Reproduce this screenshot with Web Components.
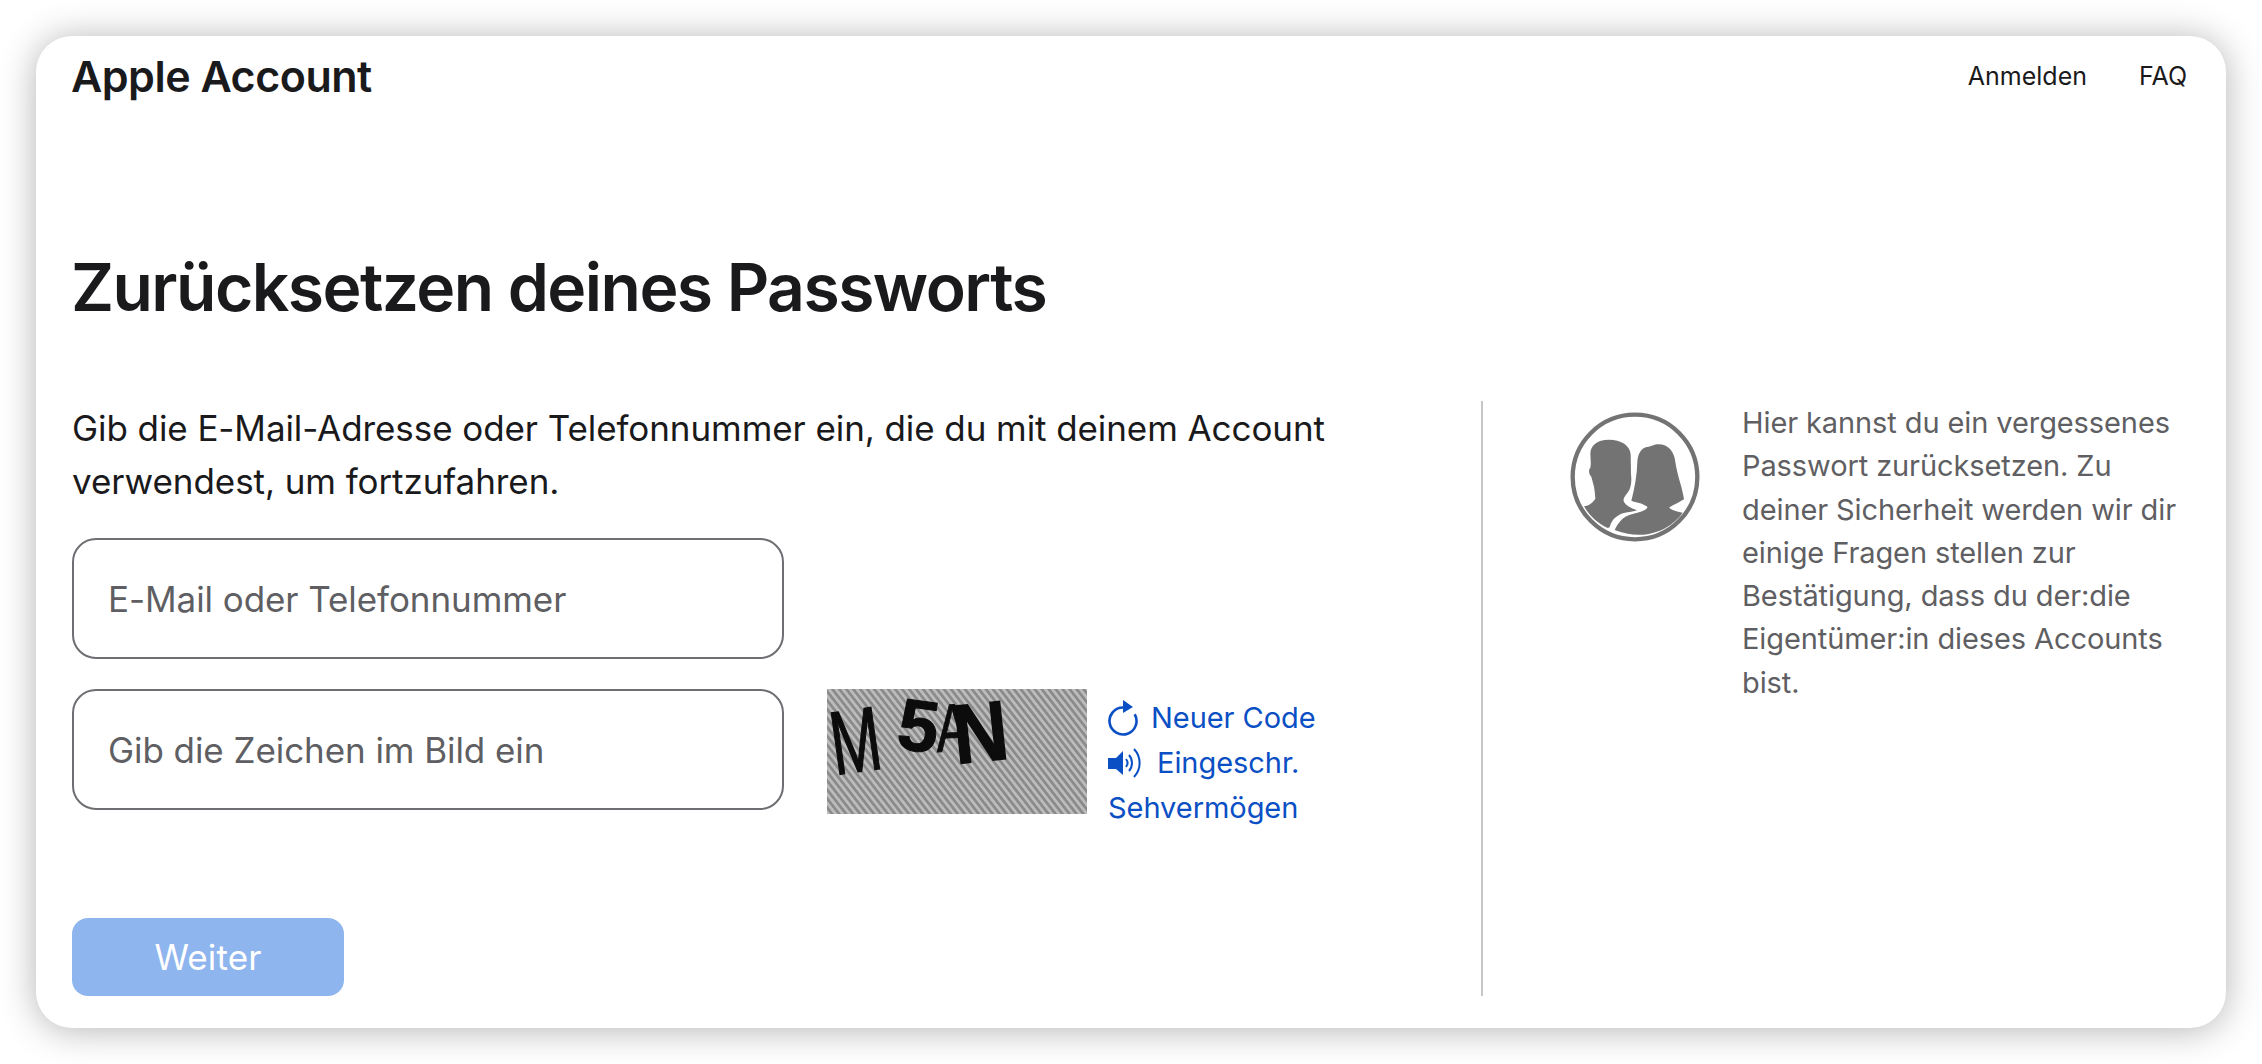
<!DOCTYPE html>
<html lang="de">
<head>
<meta charset="utf-8">
<title>Apple Account</title>
<style>
  html, body { margin: 0; background: #fff; }
  body { font-family: Inter, "Liberation Sans", sans-serif; color: #1a1a1c; }
</style>
</head>
<body>
<account-card>
  <account-header slot="header"></account-header>
  <h-title slot="title">Zurücksetzen deines Passworts</h-title>
  <reset-form slot="main"></reset-form>
  <help-aside slot="aside">Hier kannst du ein vergessenes Passwort zurücksetzen. Zu deiner Sicherheit werden wir dir einige Fragen stellen zur Bestätigung, dass du der:die Eigentümer:in dieses Accounts bist.</help-aside>
</account-card>

<script>
function shadow(el, html) {
  el.attachShadow({ mode: 'open' }).innerHTML = html;
}

class AccountCard extends HTMLElement {
  constructor() {
    super();
    shadow(this, `
      <style>
        :host { display: block; box-sizing: border-box; width: 2190px; height: 992px; margin: 36px; padding: 0 36px 32px;
          background: #fff; border-radius: 36px; box-shadow: 0 2px 36px rgba(0,0,0,.3); }
        .box { display: flex; flex-direction: column; height: 100%; }
        .cols { flex: 1; display: flex; min-height: 0; margin-top: 76px; }
        .main { width: 1411px; box-sizing: border-box; border-right: 2px solid #c6c6c6; }
        .aside { flex: 1; }
      </style>
      <div class="box">
        <slot name="header"></slot>
        <slot name="title"></slot>
        <div class="cols">
          <div class="main"><slot name="main"></slot></div>
          <div class="aside"><slot name="aside"></slot></div>
        </div>
      </div>`);
  }
}

class AccountHeader extends HTMLElement {
  constructor() {
    super();
    shadow(this, `
      <style>
        :host { display: flex; justify-content: space-between; align-items: center; height: 80px; }
        .brand { margin-left: -1px; font-size: 43px; font-weight: 600; letter-spacing: -.5px; color: #1a1a1c; }
        nav { display: flex; gap: 52px; font-size: 25px; color: #1a1a1c; padding-right: 3px; }
      </style>
      <div class="brand">Apple Account</div>
      <nav><span>Anmelden</span><span>FAQ</span></nav>`);
  }
}

class HTitle extends HTMLElement {
  constructor() {
    super();
    shadow(this, `
      <style>
        :host { display: block; margin: 133px 0 0 -1px; font-size: 66px; line-height: 76px; font-weight: 600; letter-spacing: -1.55px; color: #1a1a1c; }
      </style>
      <slot></slot>`);
  }
}

class TextField extends HTMLElement {
  constructor() {
    super();
    shadow(this, `
      <style>
        :host { display: flex; align-items: center; flex: none; box-sizing: border-box; width: 712px; height: 121px; padding: 0 34px;
          border: 2px solid #6e6e73; border-radius: 24px; font-size: 35px; color: #5f5f63; letter-spacing: -.07px; }
      </style>
      <slot></slot>`);
  }
}

class NextButton extends HTMLElement {
  constructor() {
    super();
    shadow(this, `
      <style>
        :host { display: flex; align-items: center; justify-content: center; width: 272px; height: 78px;
          border-radius: 16px; background: #8fb5ee; color: #fff; font-size: 35px; letter-spacing: .1px; }
      </style>
      <slot></slot>`);
  }
}

class CaptchaImage extends HTMLElement {
  constructor() {
    super();
    shadow(this, `
      <style>
        :host { display: block; flex: none; width: 260px; height: 125px; }
        svg { display: block; overflow: visible; }
        text { font-family: "Liberation Sans", sans-serif; fill: #0c0c0c; stroke: #0c0c0c; }
      </style>
      <svg width="260" height="125" viewBox="0 0 260 125">
        <defs>
          <pattern id="stripes" width="5.500" height="5.500" patternUnits="userSpaceOnUse" patternTransform="rotate(52)">
            <rect width="5.500" height="5.500" fill="#bcbcbc"/>
            <rect width="5.500" height="2.700" fill="#8a8a8a"/>
          </pattern>
        </defs>
        <rect width="260" height="125" fill="url(#stripes)"/>
        <text x="8" y="86" transform="rotate(-8 8 86)" font-size="90" stroke-width="1.500" textLength="50" lengthAdjust="spacingAndGlyphs">M</text>
        <text x="68" y="59" transform="rotate(8 68 59)" font-size="73" font-weight="700">5</text>
        <text x="110" y="63" transform="rotate(-2 110 63)" font-size="68" textLength="33" lengthAdjust="spacingAndGlyphs">A</text>
        <text x="129" y="75" transform="rotate(-6 129 75)" font-size="84" font-weight="700" stroke-width="1.500" textLength="55" lengthAdjust="spacingAndGlyphs">N</text>
      </svg>`);
  }
}

class CaptchaLinks extends HTMLElement {
  constructor() {
    super();
    shadow(this, `
      <style>
        :host { display: block; padding-top: 6px; font-size: 29px; line-height: 45px; color: #0a4fc4; letter-spacing: -.05px; }
        .row { display: flex; align-items: center; gap: 13px; }
        svg { display: block; flex: none; }
      </style>
      <div class="row">
        <svg width="30" height="36" viewBox="0 0 30 36" fill="none" stroke="#0a4fc4" stroke-width="2.6">
          <path d="M15 7.500A13.500 13.500 0 1 0 26.700 14.250"/>
          <path d="M15 0l10 7-10 6z" fill="#0a4fc4" stroke="none"/>
        </svg>
        <span>Neuer Code</span>
      </div>
      <div class="row">
        <svg width="36" height="30" viewBox="0 0 36 30" fill="none" stroke="#0a4fc4" stroke-width="2">
          <path d="M0 10h8l7-7v24l-7-6H0z" fill="#0a4fc4" stroke="none"/>
          <path d="M18 11c2 2.500 2 5.500 0 8"/>
          <path d="M21 7c4 4.500 4 11.500 0 16"/>
          <path d="M26 1c7.500 8 7.500 20 0 28"/>
        </svg>
        <span>Eingeschr.</span>
      </div>
      <div>Sehvermögen</div>`);
  }
}

class ResetForm extends HTMLElement {
  constructor() {
    super();
    shadow(this, `
      <style>
        :host { display: flex; flex-direction: column; height: 100%; font-size: 35px; letter-spacing: -.08px; color: #1a1a1c; }
        p { margin: 0 0 30px; line-height: 53px; width: 1290px; padding-top: 1px; }
        .stack { display: flex; flex-direction: column; gap: 30px; }
        .captcha { display: flex; align-items: flex-start; gap: 21px; }
        .captcha captcha-image { margin-left: 22px; }
        next-button { margin-top: auto; }
      </style>
      <p>Gib die E-Mail-Adresse oder Telefonnummer ein, die du mit deinem Account verwendest, um fortzufahren.</p>
      <div class="stack">
        <text-field>E-Mail oder Telefonnummer</text-field>
        <div class="captcha">
          <text-field>Gib die Zeichen im Bild ein</text-field>
          <captcha-image></captcha-image>
          <captcha-links></captcha-links>
        </div>
      </div>
      <next-button>Weiter</next-button>`);
  }
}

class HelpAside extends HTMLElement {
  constructor() {
    super();
    shadow(this, `
      <style>
        :host { display: flex; gap: 41px; padding-left: 86px; font-size: 29px; line-height: 43.300px; color: #5f5f63; letter-spacing: -.1px; }
        svg { display: block; flex: none; margin-top: 10px; }
      </style>
      <svg width="132" height="132" viewBox="84 60 396 396">
        <circle cx="282" cy="258" r="187" fill="#fff" stroke="#737373" stroke-width="13"/>
        <path fill="#737373" d="M204 146c-36 0-56 18-56 42 0 14 3 28 0 42-6 6-5 20 3 27l8 30c2 12 3 22 4 36-8 12-18 21-34 23 17 29 41 51 71 65l6-2c4-16 12-28 28-37 14-8 35-8 54-14-14-6-36-14-40-28-3-12 14-24 18-36 5-12 6-26 4-44l-1-60c-2-28-30-44-65-44z"/>
        <path fill="#737373" d="M352 160c-14 0-18 6-30 7-22 2-32 22-33 46-1 38-8 80-18 116 14 6 32 6 48 18 2 6-12 14-30 18-32 8-48 12-68 52 40 16 84 20 124 6 32-10 62-32 80-58-14-2-30-6-40-14 0-4 14-8 44-26-6-40-20-70-26-112-3-30-20-53-51-53z"/>
      </svg>
      <div><slot></slot></div>`);
  }
}

customElements.define('account-card', AccountCard);
customElements.define('account-header', AccountHeader);
customElements.define('h-title', HTitle);
customElements.define('text-field', TextField);
customElements.define('next-button', NextButton);
customElements.define('captcha-image', CaptchaImage);
customElements.define('captcha-links', CaptchaLinks);
customElements.define('reset-form', ResetForm);
customElements.define('help-aside', HelpAside);
</script>
</body>
</html>
